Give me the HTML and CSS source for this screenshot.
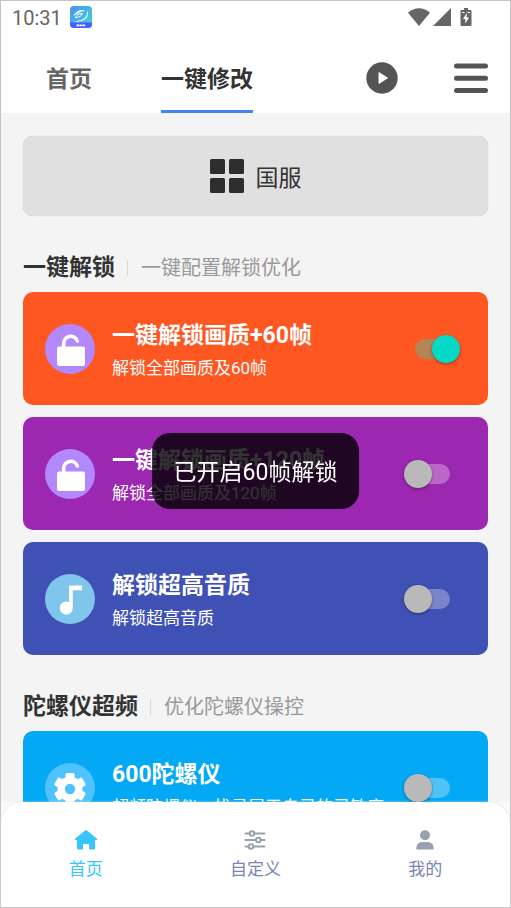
FILE: index.html
```html
<!DOCTYPE html>
<html lang="zh-CN">
<head>
<meta charset="utf-8">
<meta name="viewport" content="width=device-width, initial-scale=1">
<title>一键修改</title>
<link rel="stylesheet" href="styles.css">
</head>
<body>
<div class="app">
  <div class="status">
    <span class="status-time">10:31</span>
    <svg class="status-app" viewBox="0 0 22 22" aria-hidden="true">
      <defs>
        <linearGradient id="sky" x1="0" y1="0" x2="1" y2="1"><stop offset="0" stop-color="#4a90f5"/><stop offset="1" stop-color="#3fdad2"/></linearGradient>
        <clipPath id="tile"><rect width="22" height="22" rx="4"/></clipPath>
      </defs>
      <g clip-path="url(#tile)">
        <rect width="22" height="22" fill="url(#sky)"/>
        <rect y="16.500" width="22" height="6" fill="#4a5cff"/>
      </g>
      <path d="M4 9.500C6 5.500 10 3.800 13 4.800M17 4.500c2.500 3 .5 8-4 10-3 1.200-6 1.500-9 .7 5-.2 9-1.200 11.500-4.200 1.800-2.300 2-4.500 1.500-6.500z" fill="#fff"/>
      <path d="M4 9.500C6 5.500 10 3.800 14.500 5M5.500 11.500c1-2.500 3.500-4 7-4-1 2.500-3.500 4-7 4z" fill="none" stroke="#fff"/>
      <path d="M6.500 19.300h9" stroke="#fff" stroke-width="1.800" stroke-dasharray="2.500 .4"/>
    </svg>
    <span class="status-signals">
      <svg class="wifi" viewBox="0 0 22 18" aria-hidden="true"><path d="M0 4.800C6-1.400 16-1.400 22 4.800L11 18z"/></svg>
      <svg class="cell" viewBox="0 0 18 18" aria-hidden="true"><path d="M18 0v18H0z"/></svg>
      <svg class="battery" viewBox="0 0 12 18" aria-hidden="true"><path fill-rule="evenodd" d="M4 0h4v2h2.500q1 0 1 1v14q0 1-1 1h-9q-1 0-1-1V3q0-1 1-1H4zM6.700 5L3 11h2.300v4.500L9 9.500H6.700z"/><path class="cut" d="M2 4.500h2.500M7.500 4.500H10"/></svg>
    </span>
  </div>

  <header class="topbar">
    <nav class="tabs">
      <a class="tab" href="#home">首页</a>
      <a class="tab tab-active" href="#modify" aria-current="page">一键修改</a>
    </nav>
    <div class="actions">
      <button class="icon-button" type="button" aria-label="播放">
        <svg class="play" viewBox="0 0 32 32"><circle cx="16" cy="16" r="15.700" fill="#555353"/><path d="M13 10.600l8.500 5.400-8.500 5.400z" fill="#fff" stroke="#fff" stroke-linejoin="round"/></svg>
      </button>
      <button class="icon-button" type="button" aria-label="菜单">
        <svg class="menu" viewBox="0 0 34 30"><path d="M2.500 3h29M2.500 15.300h29M2.500 27.500h29" stroke="#555353" stroke-width="5" stroke-linecap="round"/></svg>
      </button>
    </div>
  </header>

  <main class="content">
    <button class="server" type="button">
      <svg class="server-icon" viewBox="0 0 34 34" aria-hidden="true"><rect width="15" height="15" rx="1.500"/><rect x="19" width="15" height="15" rx="1.500"/><rect y="19" width="15" height="15" rx="1.500"/><rect x="19" y="19" width="15" height="15" rx="1.500"/></svg>
      <span>国服</span>
    </button>

    <section class="group">
      <div class="group-head">
        <h2 class="group-title">一键解锁</h2>
        <p class="group-note">一键配置解锁优化</p>
      </div>
      <div class="cards">
        <label class="card card-orange">
          <svg class="badge badge-violet" viewBox="0 0 50 50" aria-hidden="true"><rect x="12" y="22.500" width="28" height="19.500" rx="2" fill="#fff"/><path d="M18.700 24v-4.500a7 7 0 0 1 13.600-2.500" fill="none" stroke="#fff" stroke-width="3.600" stroke-linecap="round"/></svg>
          <span class="card-text">
            <span class="card-title">一键解锁画质+60帧</span>
            <span class="card-note">解锁全部画质及60帧</span>
          </span>
          <input class="switch" type="checkbox" role="switch" checked>
        </label>
        <label class="card card-purple">
          <svg class="badge badge-violet" viewBox="0 0 50 50" aria-hidden="true"><rect x="12" y="22.500" width="28" height="19.500" rx="2" fill="#fff"/><path d="M18.700 24v-4.500a7 7 0 0 1 13.600-2.500" fill="none" stroke="#fff" stroke-width="3.600" stroke-linecap="round"/></svg>
          <span class="card-text">
            <span class="card-title">一键解锁画质+120帧</span>
            <span class="card-note">解锁全部画质及120帧</span>
          </span>
          <input class="switch" type="checkbox" role="switch">
        </label>
        <label class="card card-indigo">
          <svg class="badge badge-sky" viewBox="0 0 50 50" aria-hidden="true"><path d="M24 11.500h13v4.800h-9.200V34a6.500 6.500 0 1 1-3.800-5.900z" fill="#fff"/></svg>
          <span class="card-text">
            <span class="card-title">解锁超高音质</span>
            <span class="card-note">解锁超高音质</span>
          </span>
          <input class="switch" type="checkbox" role="switch">
        </label>
      </div>
    </section>

    <section class="group">
      <div class="group-head">
        <h2 class="group-title">陀螺仪超频</h2>
        <p class="group-note">优化陀螺仪操控</p>
      </div>
      <div class="cards">
        <label class="card card-blue">
          <svg class="badge badge-light" viewBox="0 0 50 50" aria-hidden="true"><g transform="translate(25 26)"><g fill="#fff"><circle r="12.500"/><rect x="-4.500" y="-16" width="9" height="32" rx="1.500"/><rect x="-4.500" y="-16" width="9" height="32" rx="1.500" transform="rotate(60)"/><rect x="-4.500" y="-16" width="9" height="32" rx="1.500" transform="rotate(120)"/></g><circle r="5.200" fill="#4fc3ff"/></g></svg>
          <span class="card-text">
            <span class="card-title">600陀螺仪</span>
            <span class="card-note">超频陀螺仪，找寻属于自己的灵敏度</span>
          </span>
          <input class="switch" type="checkbox" role="switch">
        </label>
      </div>
    </section>
  </main>

  <div class="bottom-wrap">
    <nav class="bottom">
      <a class="bottom-item bottom-active" href="#home">
        <svg class="bottom-icon" viewBox="0 0 24 24" aria-hidden="true"><path d="M12 2.200q.6 0 1 .4l9.700 8q1 1-.1 1.300H21v8.600q0 1-1 1h-4.800v-4.600q0-1-1-1H10q-1 0-1 1v4.600H4q-1 0-1-1v-8.600H1.400q-1.100-.3-.1-1.300l9.700-8q.4-.4 1-.4z" fill="currentColor"/></svg>
        首页
      </a>
      <a class="bottom-item" href="#custom">
        <svg class="bottom-icon" viewBox="0 0 24 24" aria-hidden="true"><g fill="none" stroke="#9aa1ae" stroke-width="2" stroke-linecap="round"><path d="M2.500 5.500h4M12 5.500h9.500M2.500 12h10M18 12h3.500M2.500 18.500h3M11 18.500h10.500"/><circle cx="9" cy="5.500" r="2.300"/><circle cx="15.300" cy="12" r="2.300"/><circle cx="8" cy="18.500" r="2.300"/></g></svg>
        自定义
      </a>
      <a class="bottom-item" href="#mine">
        <svg class="bottom-icon" viewBox="0 0 24 24" aria-hidden="true"><g fill="#9aa1ae"><circle cx="12" cy="7.200" r="5"/><path d="M3.400 21.500v-1.700q.4-5.800 6.600-5.800h4q6.200 0 6.600 5.800v1.700z"/></g></svg>
        我的
      </a>
    </nav>
  </div>

  <div class="toast" role="status">已开启60帧解锁</div>
</div>
</body>
</html>
```

FILE: styles.css
```css
* { box-sizing: border-box; }

body {
  margin: 0;
  font-family: Roboto, "Noto Sans CJK SC", sans-serif;
  color: #333;
}

a { color: inherit; text-decoration: none; }

button {
  font: inherit;
  color: inherit;
  border: 0;
  padding: 0;
  background: none;
}

h2, p { margin: 0; font-weight: 400; }

svg { display: block; flex: none; }

.app {
  position: relative;
  display: flex;
  flex-direction: column;
  height: 100vh;
  border: 1px solid #c4c4c4;
  background: #fff;
}

/* Status bar */
.status {
  display: flex;
  align-items: center;
  gap: 8px;
  height: 32px;
  padding: 0 38px 0 11px;
  color: #666;
}

.status-time { padding-top: 2px; font-size: 20px; }
.status-app { width: 22px; height: 22px; }

.status-signals {
  display: flex;
  gap: 3px;
  margin-left: auto;
  fill: #666;
}

.wifi { width: 22px; height: 18px; }
.cell { width: 18px; height: 18px; }
.battery { width: 12px; height: 18px; margin-left: 6px; }
.cut { stroke: #fff; }

/* Top bar */
.topbar {
  display: flex;
  justify-content: space-between;
  height: 80px;
  padding: 0 22px 0 45px;
}

.tabs { display: flex; gap: 69px; }

.tab {
  display: flex;
  align-items: center;
  padding-top: 16px;
  padding-bottom: 6px;
  border-bottom: 3px solid transparent;
  font-size: 23px;
  font-weight: 700;
  color: #666;
}

.tab-active { color: #333; border-bottom-color: #4285f4; }

.actions {
  display: flex;
  align-items: center;
  gap: 56px;
  padding-top: 10px;
}

.play { width: 32px; height: 32px; }
.menu { width: 34px; height: 30px; }

/* Scrolling content */
.content {
  flex: 1;
  min-height: 0;
  overflow-y: auto;
  scrollbar-width: none;
  padding: 23px 22px;
  background: #f4f4f4;
}

.server {
  display: flex;
  align-items: center;
  justify-content: center;
  gap: 12px;
  width: 100%;
  height: 80px;
  border-radius: 10px;
  background: #e0e0e0;
  box-shadow: 0 0 1px #aaa;
  font-size: 23px;
}

.server-icon { width: 34px; height: 34px; fill: #2d2d2d; }

.group { padding-top: 36px; }

.group-head {
  display: flex;
  align-items: center;
  margin-bottom: 8px;
  line-height: 32px;
}

.group-title { font-size: 23px; font-weight: 700; }

.group-note {
  display: flex;
  align-items: center;
  font-size: 20px;
  color: #999;
}

.group-note::before {
  content: "";
  width: 1px;
  height: 16px;
  margin: 0 13px 0 12px;
  background: #d8d8d8;
}

.cards { display: grid; gap: 12px; }

.card {
  display: flex;
  align-items: center;
  gap: 17px;
  height: 113px;
  padding: 0 28px 0 22px;
  border-radius: 10px;
  color: #fff;
}

.card-orange { background: #ff5722; }
.card-purple { background: #9c27b0; }
.card-indigo { background: #3f51b5; }
.card-blue { background: #03a9f4; }

.badge { width: 50px; height: 50px; border-radius: 50%; }
.badge-violet { background: #b388ff; }
.badge-sky { background: #80c6ec; }
.badge-light { background: #4fc3ff; }

.card-text {
  display: flex;
  flex: 1;
  flex-direction: column;
  min-width: 0;
  padding-top: 2px;
}

.card-title {
  font-size: 23px;
  font-weight: 700;
  line-height: 36px;
}

.card-note {
  font-size: 17px;
  line-height: 28px;
  white-space: nowrap;
}

.switch {
  appearance: none;
  position: relative;
  display: flex;
  align-items: center;
  flex: none;
  width: 56px;
  height: 28px;
  margin: 0;
}

.switch::before {
  content: "";
  width: 35px;
  height: 20px;
  margin: 0 auto;
  border-radius: 10px;
  background: rgba(255, 255, 255, 0.3);
}

.switch::after {
  content: "";
  position: absolute;
  left: 0;
  width: 28px;
  height: 28px;
  border-radius: 50%;
  background: #b9b9b9;
  box-shadow: 0 1px 3px rgba(0, 0, 0, 0.4);
}

.switch:checked::before { background: #b58457; }
.switch:checked::after { left: auto; right: 0; background: #03dac5; }

/* Bottom navigation */
.bottom-wrap { background: #fafafa; }

.bottom {
  display: grid;
  grid-template-columns: repeat(3, 1fr);
  height: 105px;
  padding-top: 26px;
  border-radius: 22px 22px 0 0;
  background: #fff;
  box-shadow: 0 0 2px #ddd;
}

.bottom-item {
  display: flex;
  flex-direction: column;
  align-items: center;
  gap: 5px;
  font-size: 17px;
  line-height: 24px;
  color: #7885b5;
}

.bottom-icon { width: 24px; height: 24px; }
.bottom-active { color: #36c5ff; }

/* Toast floats over the cards */
.toast {
  position: absolute;
  top: 432px;
  left: 50%;
  transform: translateX(-50%);
  padding: 24px 22px 20px;
  border-radius: 18px;
  background: rgba(0, 0, 0, 0.8);
  color: #fff;
  font-size: 23px;
  line-height: 32px;
  white-space: nowrap;
}
```
